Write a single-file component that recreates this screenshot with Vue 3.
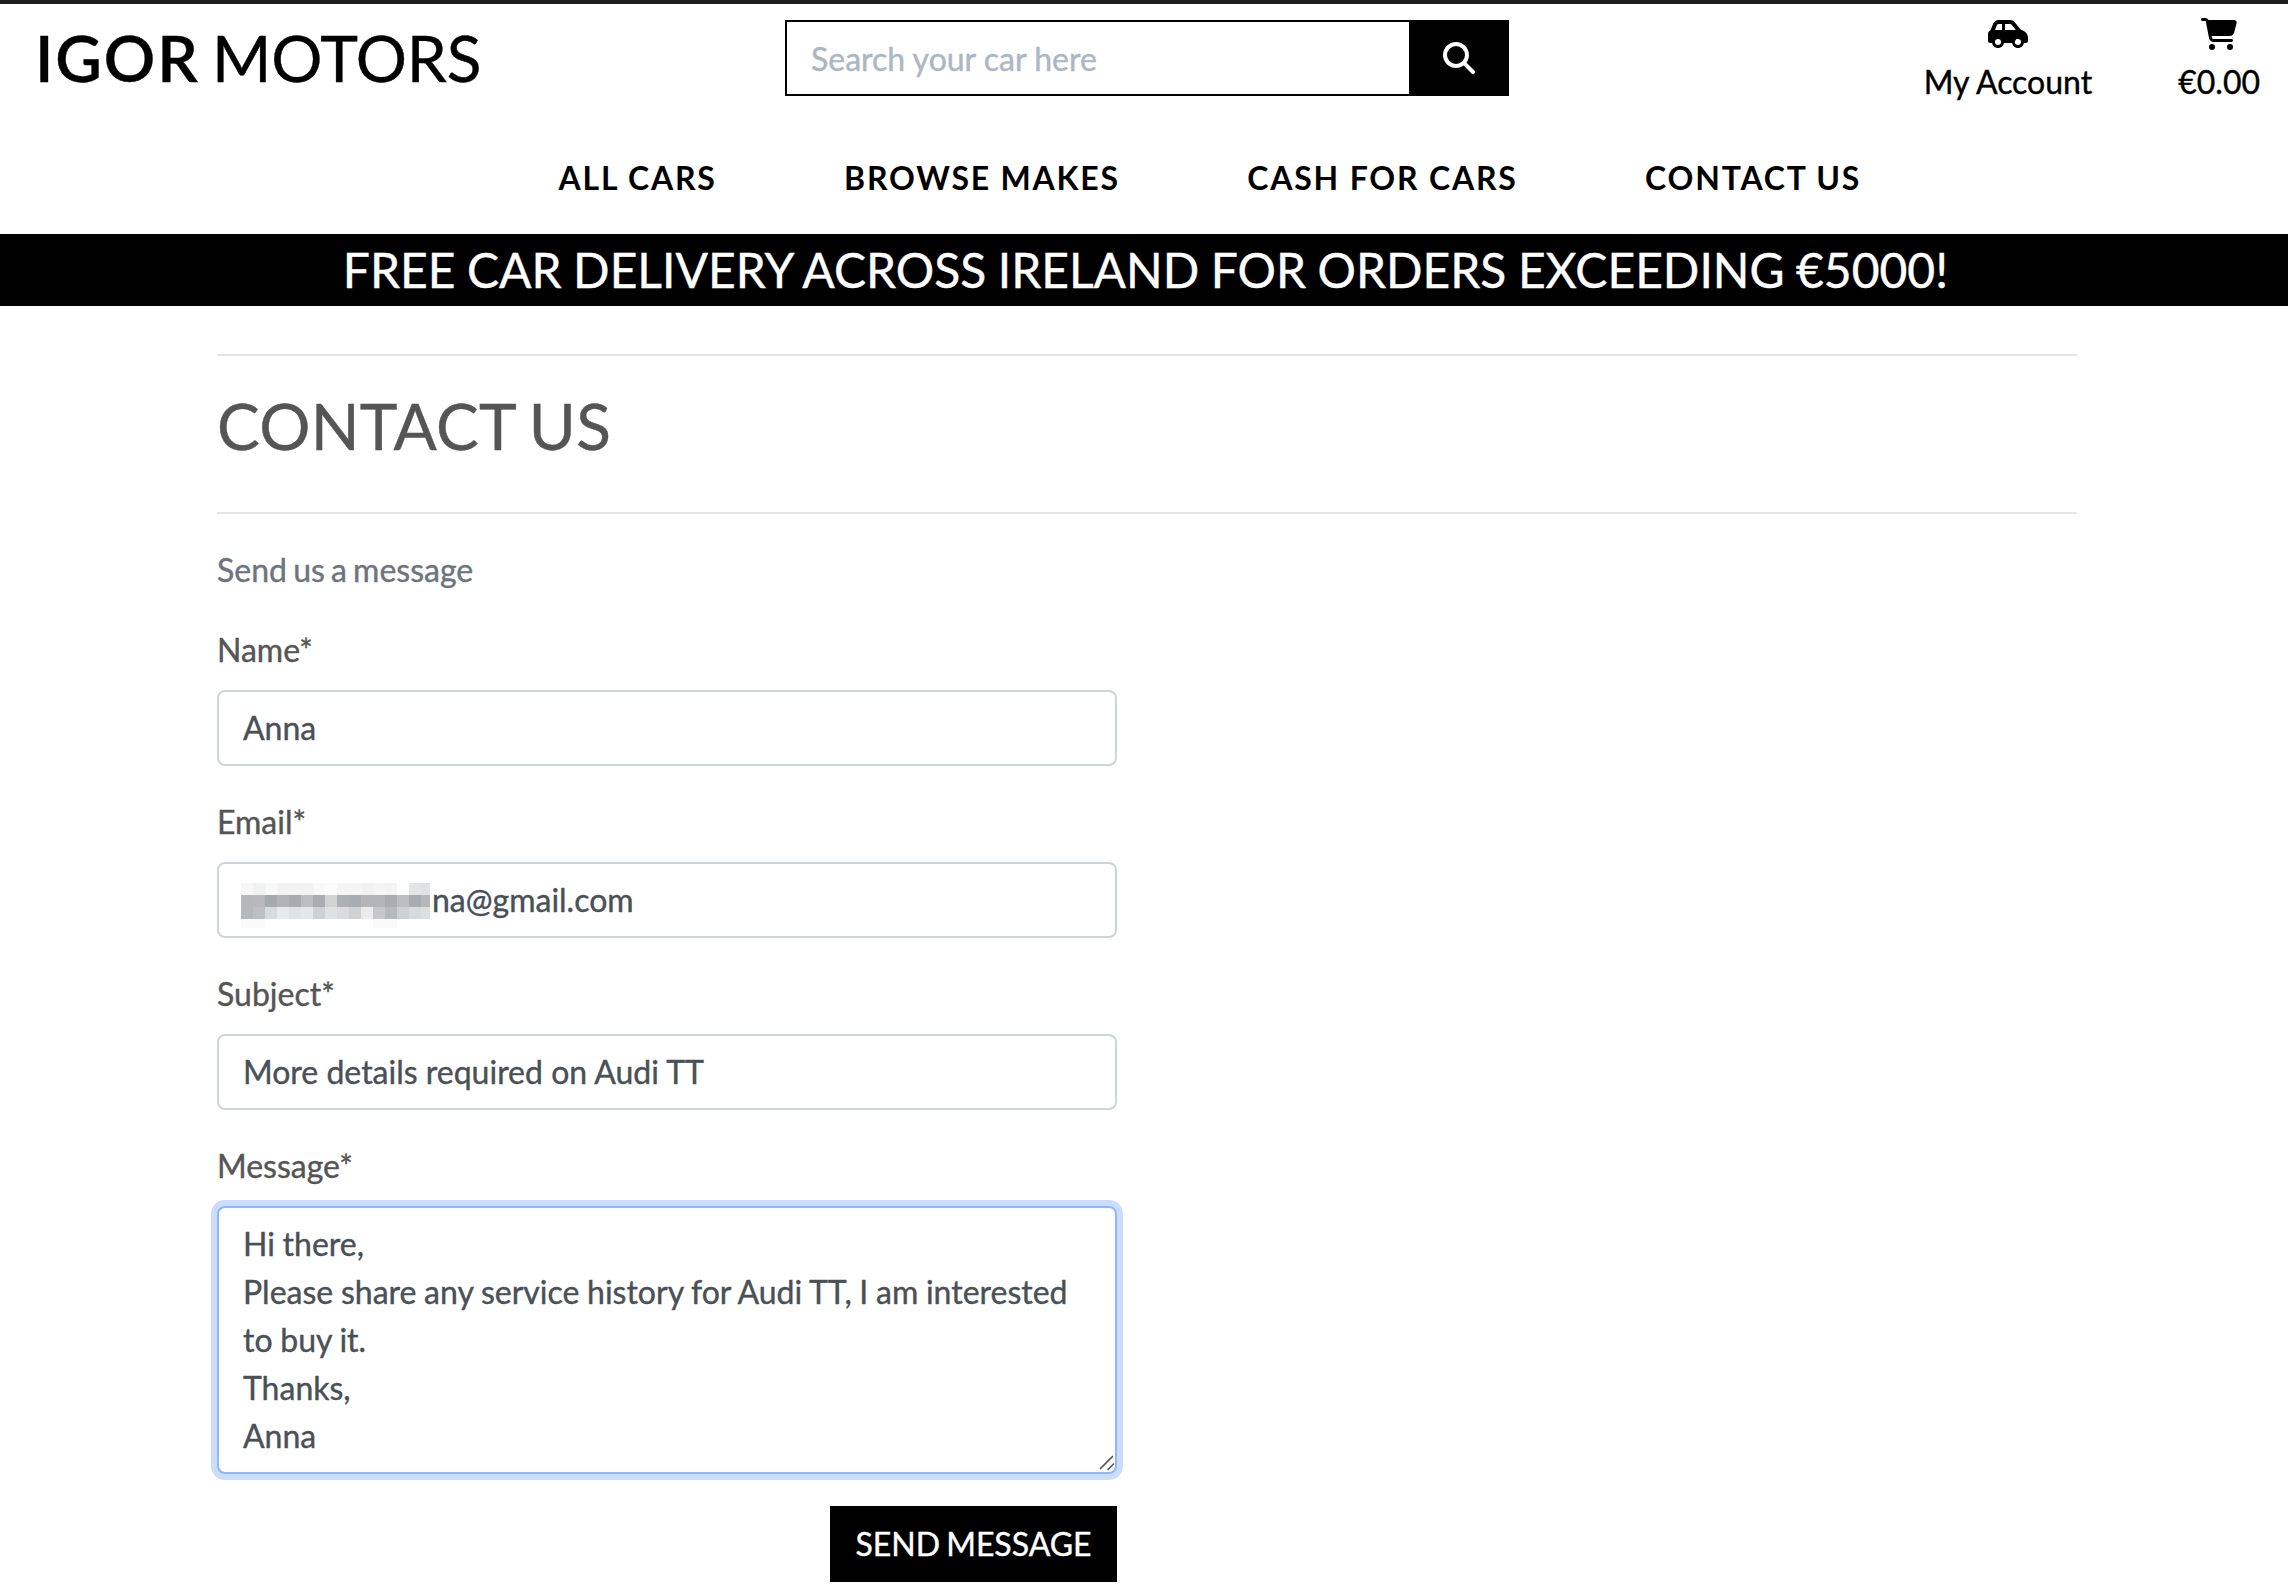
<script setup>
import { ref } from 'vue'

const search = ref('')
const navLinks = ['ALL CARS', 'BROWSE MAKES', 'CASH FOR CARS', 'CONTACT US']
const name = ref('Anna')
const emailTail = 'na@gmail.com'
const subject = ref('More details required on Audi TT')
const message = ref(
  'Hi there,\nPlease share any service history for Audi TT, I am interested to buy it.\nThanks,\nAnna'
)

// Greys of the pixelated part of the address, row by row
const mosaic = [
  ['#f7f7f7', '#f1f2f2', '#f8f8f8', '#f3f3f3', '#f3f3f3', '#f3f3f3', '#f8f8f8', '#fbfbfb', '#f5f5f5', '#f5f5f5', '#f2f2f2', '#f5f5f5', '#f4f4f4', '#fefefe', '#e3e4e6', '#e0e2e4'],
  ['#b6b8bc', '#b7b9bd', '#a5aaaf', '#b0b3b7', '#a8acb1', '#bbbdc1', '#a9adb1', '#d0d2d4', '#adb1b4', '#a9adb1', '#b3b5b9', '#b3b5b9', '#a9adb1', '#bbbdc1', '#a8acb1', '#b5b7bb'],
  ['#b7b8bc', '#bebfc3', '#d9dadc', '#e8e9ea', '#e1e2e4', '#e6e7e8', '#ced0d2', '#e0e1e3', '#dadbdd', '#d0d2d4', '#ececed', '#c6c7ca', '#b8b9be', '#cfd0d3', '#d9dadc', '#dedfe1'],
  ['#fafafa', '#fafafa', '#fff', '#fff', '#fff', '#fff', '#fff', '#fff', '#fff', '#fff', '#fff', '#fafafa', '#fafafa', '#fff', '#fff', '#fff']
]
</script>

<template>
  <div class="page">
    <header>
      <div class="topbar">
        <a class="brand"><strong>IGOR</strong> MOTORS</a>
        <form class="search" @submit.prevent>
          <input v-model="search" type="text" placeholder="Search your car here" />
          <button type="submit" aria-label="Search">
            <svg width="32" height="32" viewBox="0 0 512 512" fill="currentColor">
              <path d="M416 208c0 45.9-14.9 88.3-40 122.7L502.6 457.4c12.5 12.5 12.5 32.8 0 45.3s-32.8 12.5-45.3 0L330.7 376c-34.4 25.2-76.8 40-122.7 40C93.1 416 0 322.9 0 208S93.1 0 208 0S416 93.1 416 208zM208 352a144 144 0 1 0 0-288 144 144 0 1 0 0 288z" />
            </svg>
          </button>
        </form>
        <div class="tools">
          <a class="tool">
            <svg width="40" height="32" viewBox="0 0 640 512" fill="currentColor">
              <path d="M171.3 96H224v96H111.3l30.4-75.9C146.5 104 158.2 96 171.3 96zM272 192V96h81.2c9.7 0 18.9 4.4 25 12l67 84H272zm256.2 1L428.2 68c-18.2-22.8-45.8-36-75-36H171.3c-39.3 0-74.6 23.9-89.1 60.3L40.6 196.4C16.8 205.8 0 228.9 0 256V368c0 17.7 14.3 32 32 32H65.3c7.6 45.4 47.1 80 94.7 80s87.1-34.6 94.7-80H385.3c7.6 45.4 47.1 80 94.7 80s87.1-34.6 94.7-80H608c17.7 0 32-14.3 32-32V320c0-65.2-48.8-119-111.8-127zM434.7 368a48 48 0 1 1 90.5 32 48 48 0 1 1 -90.5-32zM160 336a48 48 0 1 1 0 96 48 48 0 1 1 0-96z" />
            </svg>
            <span>My Account</span>
          </a>
          <a class="tool">
            <svg width="36" height="32" viewBox="0 0 576 512" fill="currentColor">
              <path d="M0 24C0 10.7 10.7 0 24 0H69.5c22 0 41.5 12.8 50.6 32h411c26.3 0 45.5 25 38.6 50.4l-41 152.3c-8.5 31.4-37 53.3-69.5 53.3H170.7l5.4 28.5c2.2 11.3 12.1 19.5 23.6 19.5H488c13.3 0 24 10.7 24 24s-10.7 24-24 24H199.7c-34.6 0-64.3-24.6-70.7-58.5L77.4 54.5c-.7-3.8-4-6.5-7.9-6.5H24C10.7 48 0 37.3 0 24zM128 464a48 48 0 1 1 96 0 48 48 0 1 1 -96 0zm336-48a48 48 0 1 1 0 96 48 48 0 1 1 0-96z" />
            </svg>
            <span>€0.00</span>
          </a>
        </div>
      </div>
      <nav>
        <a v-for="link in navLinks" :key="link">{{ link }}</a>
      </nav>
    </header>
    <div class="banner">FREE CAR DELIVERY ACROSS IRELAND FOR ORDERS EXCEEDING €5000!</div>

    <main>
      <hr />
      <h2>CONTACT US</h2>
      <hr />
      <p class="lead">Send us a message</p>
      <form class="contact" @submit.prevent>
        <label for="name">Name*</label>
        <input id="name" v-model="name" class="control" type="text" />

        <label>Email*</label>
        <div class="control email">
          <svg class="mosaic" width="189" height="45" viewBox="0 0 189 45" shape-rendering="crispEdges">
            <g v-for="(row, r) in mosaic" :key="r">
              <rect v-for="(color, c) in row" :key="c" :x="c * 12" :y="r * 12" width="12" height="12" :fill="color" />
            </g>
          </svg>
          <span>{{ emailTail }}</span>
        </div>

        <label for="subject">Subject*</label>
        <input id="subject" v-model="subject" class="control" type="text" />

        <label for="message">Message*</label>
        <div class="message">
          <textarea id="message" v-model="message" class="control"></textarea>
          <svg class="grip" width="16" height="16" viewBox="0 0 16 16" stroke="#555" stroke-width="1.7" stroke-linecap="round">
            <path d="M1.5 13.5L13.5 1.5M9 14.5L14.5 9" />
          </svg>
        </div>
        <button class="send" type="submit">SEND MESSAGE</button>
      </form>
    </main>
  </div>
</template>

<style>
body {
  background: #fff;
}
</style>

<style scoped>
* {
  box-sizing: border-box;
}
.page {
  width: 2288px;
  height: 1592px;
  overflow: hidden;
  border-top: 4px solid #1e1e1e;
  font-family: Lato, "Liberation Sans", sans-serif;
  font-size: 32px;
  line-height: 48px;
  color: #555;
  -webkit-text-stroke-width: 0.4px;
}
header {
  height: 230px;
  color: #000;
}
.topbar {
  display: grid;
  grid-template-columns: 785px 724px 1fr;
  height: 132px;
}
.brand {
  padding: 6px 0 0 35px;
  font-size: 64px;
  line-height: 96px;
  white-space: nowrap;
  letter-spacing: -0.2px;
  word-spacing: -4px;
}
.brand strong {
  font-weight: 600;
  letter-spacing: 1.9px;
}
.search {
  display: flex;
  height: 76px;
  margin-top: 16px;
}
.search input {
  width: 624px;
  height: 76px;
  padding: 0 24px;
  border: 2px solid #000;
  border-right: 0;
  border-radius: 0;
  outline: 0;
  font: inherit;
}
.search input::placeholder {
  color: #aab7c4;
  opacity: 1;
}
.search button {
  flex: 1;
  display: flex;
  align-items: center;
  justify-content: center;
  padding: 0 1px 0 0;
  border: 0;
  background: #000;
  color: #fff;
}
.tools {
  display: flex;
  justify-content: flex-end;
  gap: 86px;
  padding: 14px 28px 0 0;
}
.tool {
  display: flex;
  flex-direction: column;
  align-items: center;
  gap: 8px;
}
nav {
  display: flex;
  gap: 127.4px;
  padding: 18px 0 0 558.5px;
  font-weight: 700;
  letter-spacing: 1.8px;
  white-space: nowrap;
  -webkit-text-stroke-width: 0;
}
.banner {
  height: 72px;
  padding-left: 3px;
  background: #000;
  color: #fff;
  font-size: 48px;
  line-height: 72px;
  text-align: center;
  white-space: nowrap;
  word-spacing: -0.8px;
}
main {
  width: 1860px;
  margin: 0 0 0 217px;
  padding-top: 48px;
}
hr {
  height: 2px;
  margin: 0;
  border: 0;
  background: #e5e5e5;
}
h2 {
  height: 156px;
  margin: 0;
  padding-top: 31px;
  font-size: 64px;
  font-weight: 400;
  line-height: 77px;
  letter-spacing: 0.3px;
  word-spacing: -3px;
}
.lead {
  margin: 32px 0;
  color: #6c757d;
  word-spacing: -2px;
}
.contact {
  display: flex;
  flex-direction: column;
  width: 900px;
}
label {
  margin-bottom: 16px;
}
.control {
  display: block;
  width: 900px;
  height: 76px;
  margin: 0 0 32px;
  padding: 12px 24px;
  border: 2px solid #ced4da;
  border-radius: 8px;
  outline: 0;
  background: #fff;
  color: #495057;
  font: inherit;
}
input.control {
  padding: 11px 24px 13px;
}
.email {
  display: flex;
  gap: 2px;
  padding: 12px 22px;
}
.mosaic {
  flex: none;
  margin: 7px 0 0;
}
.message {
  position: relative;
}
textarea.control {
  height: 268px;
  border-color: #8bb9fe;
  box-shadow: 0 0 0 6px #cbdcfc;
  overflow: hidden;
  resize: none;
  word-spacing: -0.5px;
}
.grip {
  position: absolute;
  right: 2px;
  bottom: 35px;
  fill: none;
}
.send {
  align-self: flex-end;
  width: 287px;
  height: 76px;
  padding: 0;
  border: 0;
  background: #000;
  color: #fff;
  font: inherit;
  white-space: nowrap;
  word-spacing: -2px;
}
</style>
